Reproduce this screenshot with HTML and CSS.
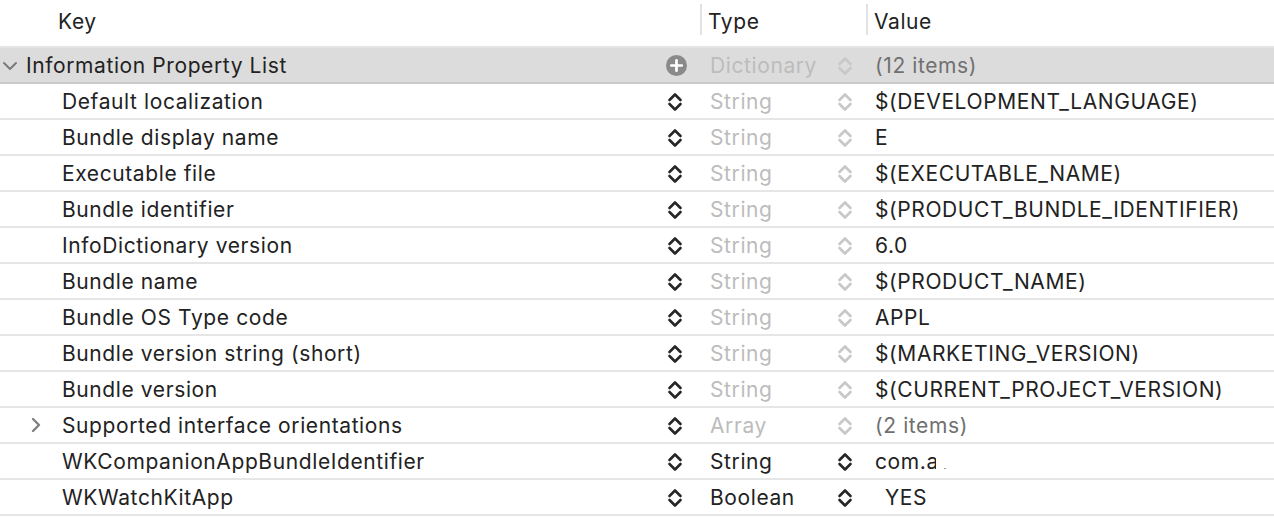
FILE: index.html
```html
<!DOCTYPE html>
<html>
<head>
<meta charset="utf-8">
<link rel="stylesheet" href="styles.css">
</head>
<body>
<svg width="0" height="0" class="defs">
  <defs>
    <symbol id="updown" viewBox="0 0 16 22">
      <path d="M2.5 9 L8 3.5 L13.5 9" fill="none" stroke="currentColor" stroke-width="2.6" stroke-linecap="round" stroke-linejoin="round"/>
      <path d="M2.5 13 L8 18.5 L13.5 13" fill="none" stroke="currentColor" stroke-width="2.6" stroke-linecap="round" stroke-linejoin="round"/>
    </symbol>
  </defs>
</svg>
<div class="plist">
  <div class="header">
    <div class="hcell hkey">Key</div>
    <div class="hcell htype">Type</div>
    <div class="hcell hvalue">Value</div>
  </div>

  <div class="row root">
    <div class="key">
      <svg class="disc" width="16" height="10" viewBox="0 0 16 10"><path d="M2 2 L8 8 L14 2" fill="none" stroke="#7a7a7a" stroke-width="2" stroke-linecap="round" stroke-linejoin="round"/></svg>
      <span class="ktext">Information Property List</span>
      <svg class="plus" width="21" height="21" viewBox="0 0 20 20"><circle cx="10" cy="10" r="10" fill="#8a8a8a"/><path d="M10 5 V15 M5 10 H15" stroke="#fff" stroke-width="2.6" stroke-linecap="round"/></svg>
    </div>
    <div class="type dim"><span class="ttext">Dictionary</span><svg class="ud"><use href="#updown"/></svg></div>
    <div class="value muted">(12 items)</div>
  </div>

  <div class="row">
    <div class="key child"><span class="ktext">Default localization</span><svg class="ud"><use href="#updown"/></svg></div>
    <div class="type dim"><span class="ttext">String</span><svg class="ud"><use href="#updown"/></svg></div>
    <div class="value">$(DEVELOPMENT_LANGUAGE)</div>
  </div>
  <div class="row">
    <div class="key child"><span class="ktext">Bundle display name</span><svg class="ud"><use href="#updown"/></svg></div>
    <div class="type dim"><span class="ttext">String</span><svg class="ud"><use href="#updown"/></svg></div>
    <div class="value">E</div>
  </div>
  <div class="row">
    <div class="key child"><span class="ktext">Executable file</span><svg class="ud"><use href="#updown"/></svg></div>
    <div class="type dim"><span class="ttext">String</span><svg class="ud"><use href="#updown"/></svg></div>
    <div class="value">$(EXECUTABLE_NAME)</div>
  </div>
  <div class="row">
    <div class="key child"><span class="ktext">Bundle identifier</span><svg class="ud"><use href="#updown"/></svg></div>
    <div class="type dim"><span class="ttext">String</span><svg class="ud"><use href="#updown"/></svg></div>
    <div class="value">$(PRODUCT_BUNDLE_IDENTIFIER)</div>
  </div>
  <div class="row">
    <div class="key child"><span class="ktext">InfoDictionary version</span><svg class="ud"><use href="#updown"/></svg></div>
    <div class="type dim"><span class="ttext">String</span><svg class="ud"><use href="#updown"/></svg></div>
    <div class="value">6.0</div>
  </div>
  <div class="row">
    <div class="key child"><span class="ktext">Bundle name</span><svg class="ud"><use href="#updown"/></svg></div>
    <div class="type dim"><span class="ttext">String</span><svg class="ud"><use href="#updown"/></svg></div>
    <div class="value">$(PRODUCT_NAME)</div>
  </div>
  <div class="row">
    <div class="key child"><span class="ktext">Bundle OS Type code</span><svg class="ud"><use href="#updown"/></svg></div>
    <div class="type dim"><span class="ttext">String</span><svg class="ud"><use href="#updown"/></svg></div>
    <div class="value">APPL</div>
  </div>
  <div class="row">
    <div class="key child"><span class="ktext">Bundle version string (short)</span><svg class="ud"><use href="#updown"/></svg></div>
    <div class="type dim"><span class="ttext">String</span><svg class="ud"><use href="#updown"/></svg></div>
    <div class="value">$(MARKETING_VERSION)</div>
  </div>
  <div class="row">
    <div class="key child"><span class="ktext">Bundle version</span><svg class="ud"><use href="#updown"/></svg></div>
    <div class="type dim"><span class="ttext">String</span><svg class="ud"><use href="#updown"/></svg></div>
    <div class="value">$(CURRENT_PROJECT_VERSION)</div>
  </div>
  <div class="row">
    <div class="key child expandable">
      <svg class="disc-r" width="12" height="16" viewBox="0 0 12 16"><path d="M3 2 L9 8 L3 14" fill="none" stroke="#808080" stroke-width="2.4" stroke-linecap="round" stroke-linejoin="round"/></svg>
      <span class="ktext">Supported interface orientations</span><svg class="ud"><use href="#updown"/></svg></div>
    <div class="type dim"><span class="ttext">Array</span><svg class="ud"><use href="#updown"/></svg></div>
    <div class="value muted">(2 items)</div>
  </div>
  <div class="row">
    <div class="key child"><span class="ktext">WKCompanionAppBundleIdentifier</span><svg class="ud"><use href="#updown"/></svg></div>
    <div class="type"><span class="ttext">String</span><svg class="ud"><use href="#updown"/></svg></div>
    <div class="value"><span class="clip">com.a</span><span class="speck"></span></div>
  </div>
  <div class="row">
    <div class="key child"><span class="ktext">WKWatchKitApp</span><svg class="ud"><use href="#updown"/></svg></div>
    <div class="type"><span class="ttext">Boolean</span><svg class="ud"><use href="#updown"/></svg></div>
    <div class="value yes">YES</div>
  </div>
</div>
</body>
</html>
```

FILE: styles.css
```css
* { box-sizing: border-box; }
html, body { margin: 0; padding: 0; background: #ffffff; }
body {
  font-family: Inter, "Helvetica Neue", "Liberation Sans", sans-serif;
  font-size: 21px;
  letter-spacing: 0.6px;
  color: #222222;
  width: 1274px;
  height: 530px;
  overflow: hidden;
}
.defs { position: absolute; }

.plist { display: flex; flex-direction: column; }

.header {
  display: grid;
  grid-template-columns: 700px 166px 1fr;
  height: 48px;
  border-bottom: 2px solid #e4e4e4;
  align-items: center;
}
.hcell {
  height: 46px;
  display: flex;
  align-items: center;
  padding-bottom: 4px;
}
.hkey { padding-left: 58px; }
.htype, .hvalue {
  padding-left: 6px;
  border-left: 2px solid #e2e2e2;
  height: 31px;
  padding-bottom: 0;
  margin-top: -8px;
  padding-top: 5px;
}

.row {
  display: grid;
  grid-template-columns: 700px 166px 1fr;
  height: 36px;
  border-bottom: 2px solid #e6e6e6;
  align-items: center;
}
.row.root {
  background: #dcdcdc;
  border-bottom: 2px solid #c9c9c9;
}

.key, .type, .value {
  display: flex;
  align-items: center;
  height: 34px;
}
.key { padding-right: 17px; }
.ktext { flex: 1; white-space: nowrap; }
.root .key { padding-left: 2px; padding-right: 13px; }
.disc { margin-right: 8px; margin-top: 2px; }
.plus { flex: none; margin-top: 1px; }
.child { padding-left: 62px; }
.child.expandable { padding-left: 30px; }
.disc-r { margin-right: 20px; flex: none; }

.ud {
  width: 16px;
  height: 22px;
  flex: none;
  color: #262626;
  margin-top: 2px;
}
.type { padding-left: 10px; padding-right: 13px; }
.ttext { flex: 1; }
.type.dim { color: #bcbcbc; }
.type.dim .ud { color: #c8c8c8; }

.value { padding-left: 9px; white-space: nowrap; }
.value.muted { color: #707070; }
.value.yes { padding-left: 19px; }
.clip {
  display: inline-block;
  width: 61px;
  overflow: hidden;
  white-space: nowrap;
}
.speck {
  display: inline-block;
  width: 2px;
  height: 1px;
  background: #9a9a9a;
  margin-left: 8px;
  margin-top: 14px;
}
```
